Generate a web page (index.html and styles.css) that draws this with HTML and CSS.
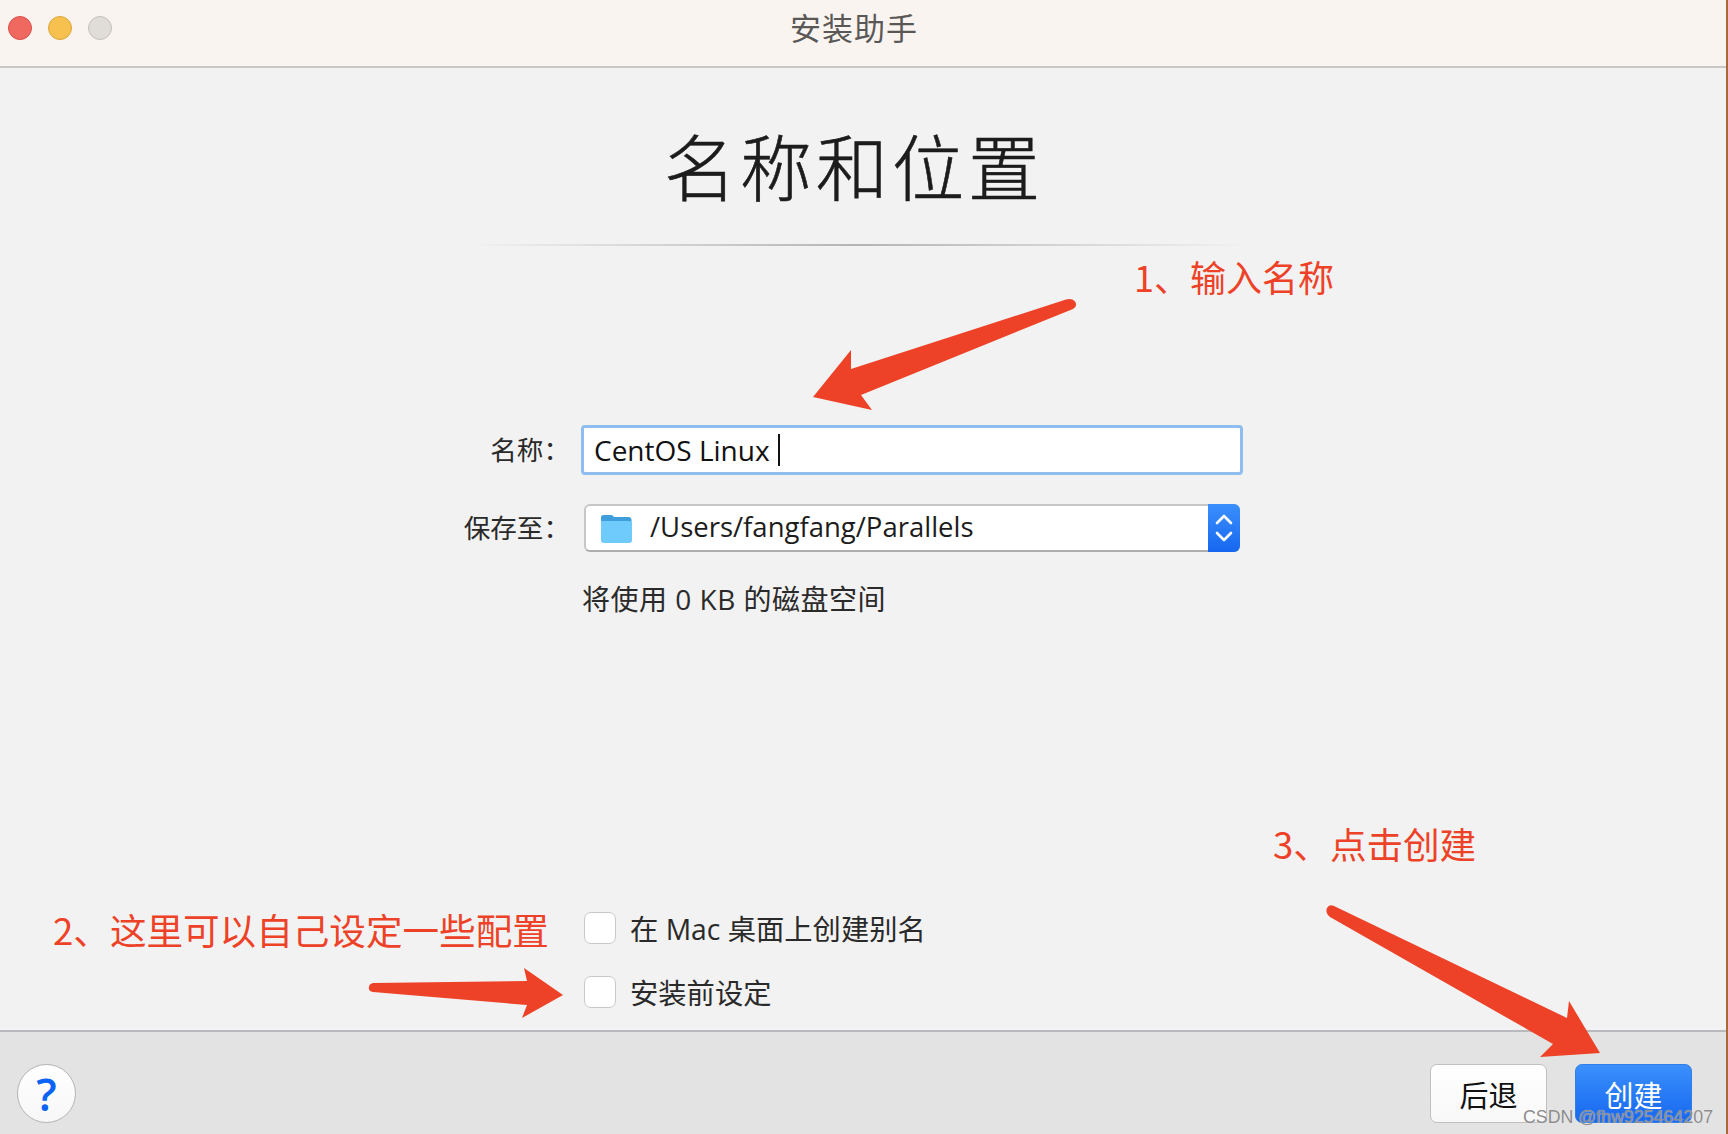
FILE: index.html
```html
<!DOCTYPE html>
<html lang="zh-CN">
<head>
<meta charset="utf-8">
<title>安装助手</title>
<link rel="stylesheet" href="styles.css">
</head>
<body>
<div class="window">
  <header class="titlebar">
    <div class="lights">
      <span class="light light-red"></span>
      <span class="light light-yellow"></span>
      <span class="light light-gray"></span>
    </div>
    <div class="window-title">安装助手</div>
  </header>
  <main class="main">
    <h1 class="heading">名称和位置</h1>
    <div class="divider"></div>
    <form class="form">
      <label class="label label-name">名称：</label>
      <div class="input"><span class="input-text">CentOS Linux</span><span class="caret"></span></div>
      <label class="label label-save">保存至：</label>
      <div class="select">
        <svg class="folder" viewBox="0 0 32 29" aria-hidden="true">
          <path d="M1 3.500Q1 1 3.500 1H11Q13 1 14 3H28.500Q31.500 3 31.500 6V10H1Z" fill="#3f9fdc"/>
          <path d="M1 7H29Q32 7 32 10V26Q32 29 29 29H4Q1 29 1 26Z" fill="#6fcbfb"/>
        </svg>
        <span class="select-text">/Users/fangfang/Parallels</span>
        <span class="stepper">
          <svg class="stepper-icon" viewBox="0 0 32 48" aria-hidden="true">
            <path d="M9 19L16 12L23 19M9 29L16 36L23 29" fill="none" stroke="#fff" stroke-width="2.600" stroke-linecap="round" stroke-linejoin="round"/>
          </svg>
        </span>
      </div>
      <p class="hint">将使用 0 KB 的磁盘空间</p>
    </form>
    <div class="options">
      <label class="option"><span class="checkbox"></span><span>在 Mac 桌面上创建别名</span></label>
      <label class="option"><span class="checkbox"></span><span>安装前设定</span></label>
    </div>
  </main>
  <footer class="footer">
    <button class="help" type="button">?</button>
    <div class="actions">
      <button class="btn btn-back" type="button">后退</button>
      <button class="btn btn-create" type="button">创建</button>
    </div>
  </footer>
  <svg class="arrows" viewBox="0 0 1728 1134" aria-hidden="true">
    <path class="arrow" d="M1066 299.500Q1072 298 1075 301.500Q1078 306 1073 309L861 395L872 410L813 397L851 350L851 369Z"/>
    <path class="arrow" d="M373 983L527 981L524 968L563 995L522 1018L527 1005L373 992Q368 991 369 987Q369 984 373 983Z"/>
    <path class="arrow" d="M1334 906L1567 1018L1569 1001L1600 1053L1540 1057L1553 1044L1330 917Q1325 913 1327 908Q1329 904 1334 906Z"/>
  </svg>
  <div class="note note-1">1、输入名称</div>
  <div class="note note-2">2、这里可以自己设定一些配置</div>
  <div class="note note-3">3、点击创建</div>
  <div class="watermark">CSDN @fhw925464207</div>
</div>
</body>
</html>
```
FILE: styles.css
```css
* { box-sizing: border-box; }
html, body { margin: 0; height: 100%; }
body {
  background: #a8683c;
  font-family: "Open Sans", "Noto Sans CJK SC", sans-serif;
  color: #1c1c1c;
  overflow: hidden;
}
.window {
  position: relative;
  width: 1726px;
  height: 1134px;
  display: flex;
  flex-direction: column;
  background: #f2f2f2;
  font-family: "Open Sans", "Noto Sans CJK SC", sans-serif;
}
.titlebar {
  height: 68px;
  flex: none;
  display: flex;
  align-items: center;
  background: #f9f4f0;
  border-bottom: 2px solid #c9c8c7;
  padding: 0 26px 10px 8px;
  position: relative;
}
.lights { display: flex; gap: 16px; width: 0; flex: none; }
.light { width: 24px; height: 24px; border-radius: 50%; flex: none; border: 1px solid; }
.light-red { background: #f06960; border-color: #d9504c; }
.light-yellow { background: #f6c14f; border-color: #dda63c; }
.light-gray { background: #e0dcd8; border-color: #c5c0bb; }
.window-title {
  flex: 1;
  text-align: center;
  font-size: 31px;
  letter-spacing: 1px;
  line-height: 40px;
  color: #5a5856;
}
.main {
  flex: 1;
  display: flex;
  flex-direction: column;
  min-height: 0;
  padding-bottom: 23px;
}
.heading {
  margin: 0;
  padding: 53px 18px 0 0;
  height: 176px;
  text-align: center;
  font-size: 72px;
  line-height: 92px;
  font-weight: 300;
  letter-spacing: 4px;
  color: #1c1c1c;
  -webkit-text-stroke: 0.6px #1c1c1c;
}
.divider {
  width: 780px;
  height: 2px;
  margin-left: 468px;
  background: linear-gradient(90deg, rgba(180,180,180,0), #b4b4b4 50%, rgba(180,180,180,0));
}
.form {
  display: grid;
  grid-template-columns: 581px 662px;
  grid-template-rows: 50px 48px auto;
  row-gap: 29px;
  margin-top: 179px;
  align-items: center;
}
.label {
  justify-self: end;
  font-size: 26.600px;
  line-height: 34px;
  color: #2a2a2a;
  padding-right: 11px;
}
.input {
  height: 50px;
  border: 3px solid #8fbeee;
  border-radius: 4px;
  background: #fff;
  display: flex;
  align-items: center;
  padding-left: 10px;
}
.input-text { font-size: 28px; color: #111; }
.caret { width: 2px; height: 32px; background: #111; margin-left: 8px; }
.select {
  height: 48px;
  margin: 0 3px;
  background: #fff;
  border: 2px solid #c6c6c6;
  border-bottom-color: #aeaeae;
  border-radius: 6px;
  display: flex;
  align-items: center;
  padding-left: 14px;
  position: relative;
}
.folder { width: 32px; height: 29px; flex: none; }
.select-text {
  font-size: 27.500px;
  line-height: 36px;
  margin: -2px 0 0 18px;
  flex: 1;
  color: #1c1c1c;
}
.stepper {
  width: 32px;
  height: 48px;
  margin: -2px -2px -2px 0;
  flex: none;
  background: linear-gradient(#3b90fd, #1667ef);
  border-radius: 0 6px 6px 0;
  display: flex;
}
.stepper-icon { width: 32px; height: 48px; }
.hint {
  grid-column: 2;
  margin: 0;
  padding-left: 1px;
  font-size: 28px;
  line-height: 36px;
  letter-spacing: 0.5px;
  color: #2a2a2a;
}
.options {
  margin-top: auto;
  margin-left: 584px;
  display: flex;
  flex-direction: column;
  gap: 33px;
}
.option {
  display: flex;
  align-items: center;
  gap: 14px;
  height: 31px;
  font-size: 28.300px;
  color: #2a2a2a;
}
.checkbox {
  width: 32px;
  height: 32px;
  flex: none;
  background: #fff;
  border: 1.500px solid #c8c8c8;
  border-radius: 7px;
}
.footer {
  height: 104px;
  flex: none;
  background: #e3e3e3;
  border-top: 2px solid #b9b9bd;
  display: flex;
  justify-content: space-between;
  align-items: flex-start;
  padding: 32px 34px 0 17px;
}
.help {
  width: 59px;
  height: 59px;
  padding: 0;
  border-radius: 50%;
  background: linear-gradient(#fff, #f7f7f7);
  border: 1.500px solid #b4b4b4;
  font-family: "Open Sans", sans-serif;
  font-weight: 600;
  font-size: 45px;
  line-height: 56px;
  color: #0b63f6;
}
.actions { display: flex; gap: 28px; }
.btn {
  width: 117px;
  height: 59px;
  padding: 0;
  border-radius: 7px;
  font-family: "Noto Sans CJK SC", sans-serif;
  font-size: 29px;
}
.btn-back {
  background: linear-gradient(#fff, #f8f8f8);
  border: 1.500px solid #c0c0c0;
  color: #111;
}
.btn-create {
  background: linear-gradient(#3b90fd, #1667ef);
  border: 1px solid #2f7fe6;
  color: #fff;
}
.arrows {
  position: absolute;
  left: 0;
  top: 0;
  width: 1728px;
  height: 1134px;
  pointer-events: none;
}
.arrow { fill: #ed4227; }
.note {
  position: absolute;
  font-family: "Noto Sans CJK SC", sans-serif;
  font-size: 36.600px;
  line-height: 48px;
  color: #ed4227;
  white-space: nowrap;
}
.note-1 { left: 1134px; top: 252px; font-size: 36px; }
.note-2 { left: 53px; top: 906px; }
.note-3 { left: 1273px; top: 820px; }
.watermark {
  position: absolute;
  left: 1523px;
  top: 1106px;
  font-family: "Liberation Sans", sans-serif;
  font-size: 17.800px;
  line-height: 22px;
  color: #8c8c8c;
  text-shadow: 0 0 1px rgba(255, 255, 255, 0.7);
  white-space: nowrap;
}
```
